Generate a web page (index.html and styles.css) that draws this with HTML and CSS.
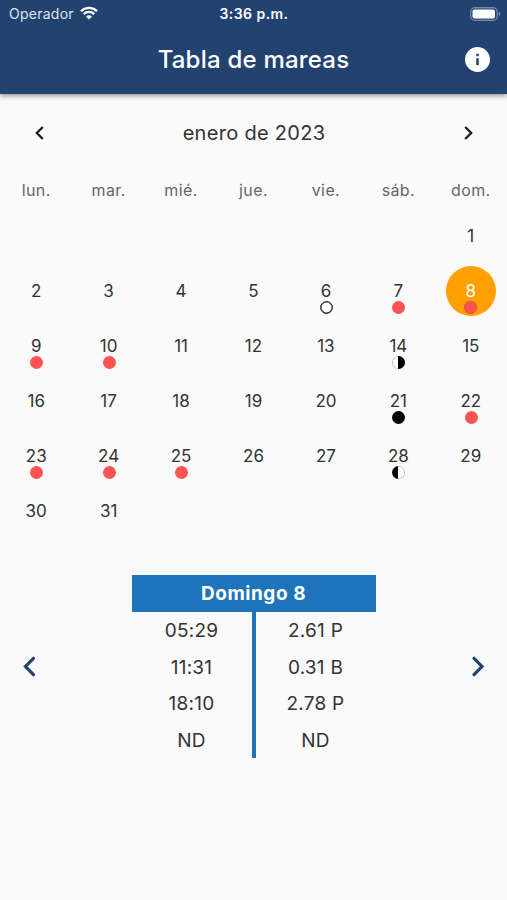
FILE: index.html
```html
<!DOCTYPE html>
<html lang="es">
<head>
  <meta charset="UTF-8">
  <meta name="viewport" content="width=device-width, initial-scale=1.0">
  <title>Tabla de mareas</title>
  <link rel="stylesheet" href="styles.css">
</head>
<body>
  <header class="header">
    <div class="status-bar">
      <div class="carrier">
        <span>Operador</span>
        <svg class="wifi" viewBox="0 0 18 14" width="18" height="14">
          <path d="M1 5.2a11.3 11.3 0 0 1 16 0M3.8 8.1a7.4 7.4 0 0 1 10.4 0" fill="none" stroke="#fff" stroke-width="2.3"/>
          <path d="M9 13.6 6 10.6a4.3 4.3 0 0 1 6 0z" fill="#fff"/>
        </svg>
      </div>
      <span class="clock">3:36 p.m.</span>
      <svg class="battery" viewBox="0 0 31 14" width="31" height="14">
        <rect x=".75" y=".75" width="26.5" height="12.5" rx="4" fill="none" stroke="#6f86a6" stroke-width="1.3"/>
        <rect x="2.5" y="2.5" width="22.5" height="9" rx="2" fill="#fff"/>
        <path d="M28.8 4.8v4.4q1.4-.7 1.4-2.2t-1.4-2.2z" fill="#7b90ad"/>
      </svg>
    </div>
    <div class="title-bar">
      <h1>Tabla de mareas</h1>
      <svg class="info" viewBox="2 2 20 20" width="25" height="25">
        <circle cx="12" cy="12" r="10" fill="#fff"/>
        <path fill="#22436f" d="M11 11h2v5.6h-2zM11 7.4h2v2h-2z"/>
      </svg>
    </div>
  </header>

  <main>
    <div class="month">
      <svg viewBox="0 0 9 14" width="9" height="14"><path d="M7.8 1 1.8 7l6 6"/></svg>
      <h2>enero de 2023</h2>
      <svg viewBox="0 0 9 14" width="9" height="14"><path d="M1.2 1l6 6-6 6"/></svg>
    </div>

    <div class="week weekdays">
      <span>lun.</span><span>mar.</span><span>mié.</span><span>jue.</span><span>vie.</span><span>sáb.</span><span>dom.</span>
    </div>

    <!-- dots: red marks, moon phases in black and white -->
    <div class="week days">
      <div class="day first">1</div>

      <div class="day">2</div>
      <div class="day">3</div>
      <div class="day">4</div>
      <div class="day">5</div>
      <div class="day">6<i class="dot full"></i></div>
      <div class="day">7<i class="dot red"></i></div>
      <div class="day selected">8<i class="dot red"></i></div>

      <div class="day">9<i class="dot red"></i></div>
      <div class="day">10<i class="dot red"></i></div>
      <div class="day">11</div>
      <div class="day">12</div>
      <div class="day">13</div>
      <div class="day">14<i class="dot waning"></i></div>
      <div class="day">15</div>

      <div class="day">16</div>
      <div class="day">17</div>
      <div class="day">18</div>
      <div class="day">19</div>
      <div class="day">20</div>
      <div class="day">21<i class="dot new"></i></div>
      <div class="day">22<i class="dot red"></i></div>

      <div class="day">23<i class="dot red"></i></div>
      <div class="day">24<i class="dot red"></i></div>
      <div class="day">25<i class="dot red"></i></div>
      <div class="day">26</div>
      <div class="day">27</div>
      <div class="day">28<i class="dot waxing"></i></div>
      <div class="day">29</div>

      <div class="day">30</div>
      <div class="day">31</div>
    </div>

    <section class="tides">
      <svg viewBox="0 0 14 22" width="14" height="22"><path d="M11.5 3.3 3.5 11.5l8 8.2"/></svg>
      <div class="tide-table">
        <h3>Domingo 8</h3>
        <div class="tide-cols">
          <div class="times">
            <span>05:29</span><span>11:31</span><span>18:10</span><span>ND</span>
          </div>
          <div class="heights">
            <span>2.61 P</span><span>0.31 B</span><span>2.78 P</span><span>ND</span>
          </div>
        </div>
      </div>
      <svg viewBox="0 0 14 22" width="14" height="22"><path d="M3 3.3 11 11.5l-8 8.2"/></svg>
    </section>
  </main>
</body>
</html>
```
FILE: styles.css
```css
* {
  box-sizing: border-box;
}
body {
  margin: 0;
  height: 100vh;
  overflow: hidden;
  background: #fafafa;
  color: #333;
  font-family: Inter, sans-serif;
}
h1, h2, h3 {
  margin: 0;
}
svg {
  display: block;
}
.header {
  height: 94px;
  background: #22436f;
  color: #fff;
  box-shadow: 0 2px 5px rgba(0,0,0,0.4);
}
.status-bar {
  display: grid;
  grid-template-columns: 1fr auto 1fr;
  align-items: center;
  height: 27px;
  padding: 0 6px 0 9px;
}
.carrier {
  display: flex;
  align-items: center;
  gap: 6px;
  font-size: 14px;
  letter-spacing: 0.25px;
  color: #dfe5ee;
}
.wifi {
  margin-top: -2px;
}
.clock {
  margin-right: 2px;
  font-size: 14px;
  font-weight: 600;
  letter-spacing: 0.45px;
}
.battery {
  justify-self: end;
}
.title-bar {
  display: grid;
  grid-template-columns: 1fr auto 1fr;
  align-items: center;
  height: 65px;
  padding: 0 17px;
}
.title-bar h1 {
  grid-column: 2;
  font-size: 24px;
  font-weight: 500;
  letter-spacing: 0.22px;
}
.info {
  justify-self: end;
}
.month {
  display: flex;
  justify-content: space-between;
  align-items: center;
  height: 78px;
  padding: 0 34px 0 35px;
}
.month h2 {
  font-size: 20px;
  font-weight: 400;
  letter-spacing: 0.3px;
}
.month path {
  fill: none;
  stroke: #1c1c1c;
  stroke-width: 2.3;
}
.week {
  display: grid;
  grid-template-columns: repeat(7, 1fr);
  text-align: center;
}
.weekdays {
  height: 36px;
  line-height: 36px;
  font-size: 16px;
  letter-spacing: 0.4px;
  color: #666;
}
.days {
  grid-auto-rows: 55px;
  font-size: 17px;
}
.day {
  display: flex;
  flex-direction: column;
  align-items: center;
  justify-self: center;
  align-self: center;
  width: 50px;
  height: 50px;
  padding-top: 15px;
  line-height: 20px;
}
.first {
  grid-column: 7;
}
.selected {
  border-radius: 50%;
  background: #ffa000;
  color: #fff;
}
.dot {
  flex: none;
  width: 13px;
  height: 13px;
  margin-left: 1px;
  border-radius: 50%;
}
.red {
  background: #ff5252;
}
.selected .red {
  margin-left: 0;
  background: #f9524f;
  box-shadow: inset 0 0 0 1px #dd5a3c;
}
.full {
  border: 1.5px solid #222;
  box-shadow: inset 0 0 0 0.5px #222;
  background: #fff;
}
.new {
  background: #000;
}
.waning {
  background: linear-gradient(90deg, transparent 50%, #000 50%), radial-gradient(#fff 5.4px, #bbb 6px);
}
.waxing {
  background: linear-gradient(90deg, #000 50%, transparent 50%), radial-gradient(#fff 5.4px, #bbb 6px);
}
.tides {
  display: flex;
  justify-content: space-between;
  align-items: center;
  margin-top: 37px;
  padding: 0 22px;
}
.tides path {
  fill: none;
  stroke: #22436f;
  stroke-width: 3.2;
  stroke-linecap: round;
}
.tide-table {
  width: 244px;
  font-size: 19px;
  line-height: 36.6px;
  letter-spacing: 0.25px;
  text-align: center;
}
.tide-table h3 {
  height: 36.6px;
  padding-top: 1px;
  background: #1e74bb;
  color: #fff;
  font-size: 19px;
  font-weight: 700;
  letter-spacing: 0.55px;
}
.tide-cols {
  display: grid;
  grid-template-columns: 1fr 1fr;
  height: 146.4px;
}
.tide-cols > div {
  height: 146.4px;
  padding-top: 1.3px;
}
.tide-cols span {
  display: block;
  height: 36.7px;
}
.times {
  border-right: 2px solid #1e74bb;
}
.heights {
  border-left: 2px solid #1e74bb;
}
```
